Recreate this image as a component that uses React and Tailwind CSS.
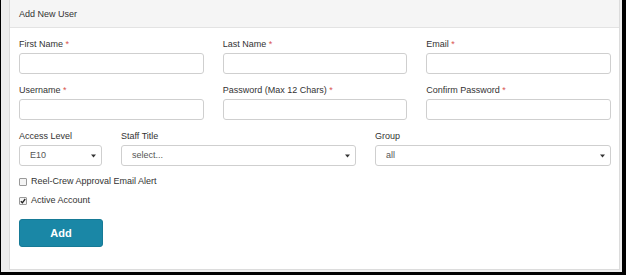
import React from "react";

const font = { fontFamily: '"Liberation Sans", Arial, sans-serif' };

function Label({ text, req }) {
  return (
    <div className="h-[11px] leading-[11px] text-[9px] text-[#333]">
      {text}
      {req && <span className="text-[#d9534f]"> *</span>}
    </div>
  );
}

function Field({ label, req }) {
  return (
    <div className="flex flex-col">
      <Label text={label} req={req} />
      <div className="mt-[3px] h-[21px] rounded-[3px] border border-[#cfcfcf] bg-white" />
    </div>
  );
}

function Arrow() {
  return (
    <svg width="5" height="4" viewBox="0 0 5 4" className="shrink-0">
      <path d="M0 0.5 L5 0.5 L2.5 3.5 Z" fill="#333" />
    </svg>
  );
}

function Select({ label, value }) {
  return (
    <div className="flex flex-col">
      <Label text={label} />
      <div className="mt-[3px] flex h-[21px] items-center justify-between rounded-[3px] border border-[#cfcfcf] bg-white pl-[10px] pr-[5px] text-[9px] text-[#555]">
        <span>{value}</span>
        <Arrow />
      </div>
    </div>
  );
}

function Check({ checked, text }) {
  return (
    <div className="flex h-[11px] items-center text-[9px] leading-[11px] text-[#333]">
      <span className="flex h-[8px] w-[8px] items-center justify-center rounded-[1px] border border-[#999] bg-[#f4f4f4]">
        {checked && (
          <svg width="6" height="6" viewBox="0 0 6 6">
            <path d="M0.8 3.2 L2.4 4.8 L5.2 1" stroke="#222" strokeWidth="1.3" fill="none" />
          </svg>
        )}
      </span>
      <span className="ml-[4px]">{text}</span>
    </div>
  );
}

export default function App() {
  return (
    <div
      style={font}
      className="h-[275px] w-[626px] border-l border-r-[4px] border-b-[3px] border-black bg-[#eeeeee] pl-[8px] pr-[2px] pb-[2px] box-border"
    >
      <div className="flex h-full flex-col border-x border-b border-[#dcdcdc] bg-white">
        <div className="flex h-[28px] items-center border-b border-[#e3e3e3] bg-[#f5f5f5] pl-[9px] pt-[3px] text-[9px] text-[#333]">
          Add New User
        </div>
        <div className="flex flex-col pl-[9px] pr-[8px] pt-[11px]">
          <div className="grid grid-cols-3 gap-x-[19px]">
            <Field label="First Name" req />
            <Field label="Last Name" req />
            <Field label="Email" req />
          </div>
          <div className="mt-[11px] grid grid-cols-3 gap-x-[19px]">
            <Field label="Username" req />
            <Field label="Password (Max 12 Chars)" req />
            <Field label="Confirm Password" req />
          </div>
          <div className="mt-[11px] grid grid-cols-[83px_235px_1fr] gap-x-[19px]">
            <Select label="Access Level" value="E10" />
            <Select label="Staff Title" value="select..." />
            <Select label="Group" value="all" />
          </div>
          <div className="mt-[10px] flex flex-col gap-[8px]">
            <Check text="Reel-Crew Approval Email Alert" />
            <Check checked text="Active Account" />
          </div>
          <div className="mt-[13px]">
            <button className="flex h-[28px] w-[84px] items-center justify-center rounded-[3px] border border-[#167a96] bg-[#1a87a6] text-[11px] font-bold text-white">
              Add
            </button>
          </div>
        </div>
      </div>
    </div>
  );
}
